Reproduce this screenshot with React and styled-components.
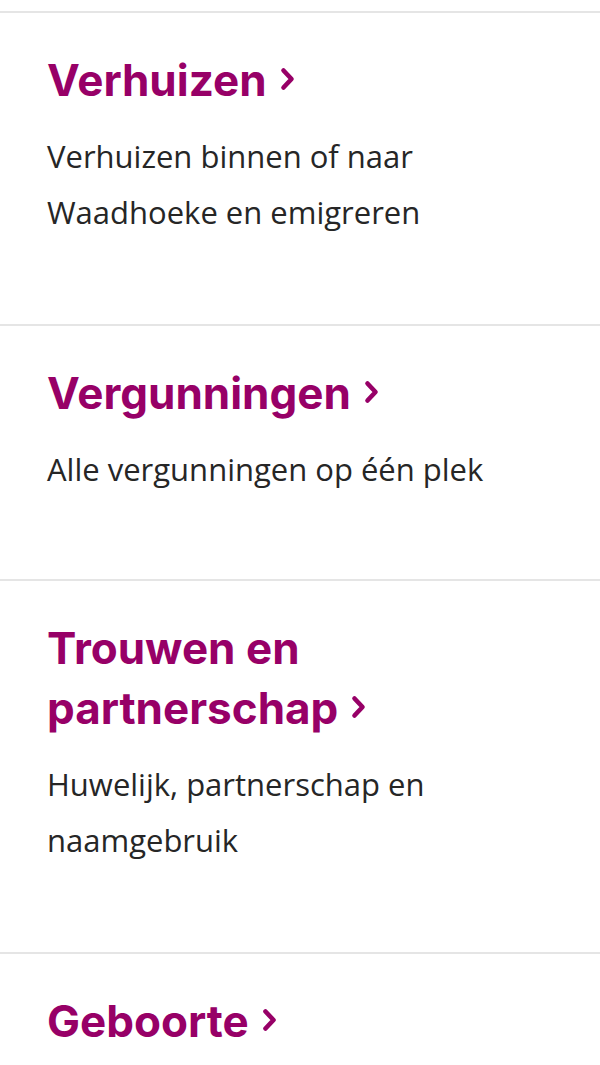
import React from "react";
import styled, { createGlobalStyle } from "styled-components";

const Global = createGlobalStyle`
  html, body { margin: 0; padding: 0; background: #fff; }
  body { font-family: "Open Sans", sans-serif; }
`;

const Page = styled.main`
  padding-top: 11px;
`;

const Item = styled.section`
  border-top: 2px solid #e5e5e5;
  padding: 37px 47px ${(p) => p.$pb}px;
`;

const Heading = styled.a`
  display: block;
  margin: 0;
  font-family: Inter, "Liberation Sans", sans-serif;
  font-weight: 700;
  font-size: 44px;
  line-height: 60px;
  color: #970067;
  text-decoration: none;
`;

const Last = styled.span`
  white-space: nowrap;
`;

const Chevron = styled.svg`
  width: 15px;
  height: 24px;
  margin-left: 13px;
  vertical-align: 5px;
`;

const Desc = styled.p`
  margin: 18px 0 0;
  font-family: "Open Sans", sans-serif;
  font-size: 31px;
  line-height: 56px;
  color: #262626;
`;

const items = [
  { title: "Verhuizen", desc: "Verhuizen binnen of naar Waadhoeke en emigreren", pb: 84 },
  { title: "Vergunningen", desc: "Alle vergunningen op één plek", pb: 82 },
  { title: "Trouwen en partnerschap", desc: "Huwelijk, partnerschap en naamgebruik", pb: 84 },
  { title: "Geboorte", desc: "", pb: 0 },
];

function Arrow() {
  return (
    <Chevron viewBox="0 0 15 24" fill="none" aria-hidden="true">
      <path d="M3.5 3.5 L11.5 12 L3.5 20.5" stroke="#970067" strokeWidth="4.6" strokeLinecap="round" strokeLinejoin="round" />
    </Chevron>
  );
}

function Title({ text }) {
  const words = text.split(" ");
  const last = words.pop();
  return (
    <Heading href="#">
      {words.length ? words.join(" ") + " " : ""}
      <Last>
        {last}
        <Arrow />
      </Last>
    </Heading>
  );
}

export default function App() {
  return (
    <>
      <Global />
      <Page>
        {items.map((it) => (
          <Item key={it.title} $pb={it.pb}>
            <Title text={it.title} />
            {it.desc && <Desc>{it.desc}</Desc>}
          </Item>
        ))}
      </Page>
    </>
  );
}
